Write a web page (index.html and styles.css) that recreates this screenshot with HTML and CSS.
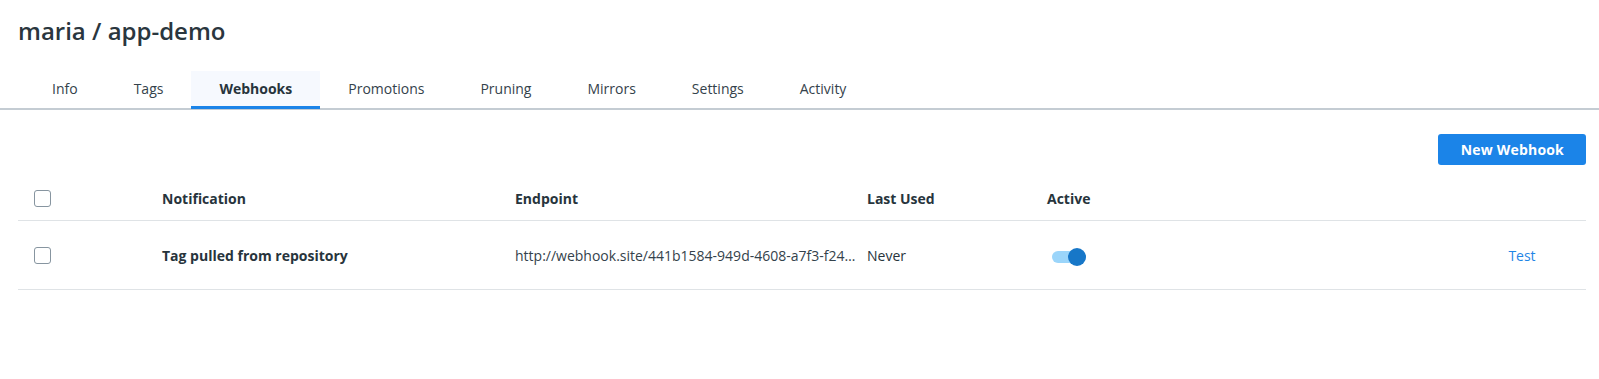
FILE: index.html
```html
<!DOCTYPE html>
<html lang="en">

<head>
    <meta charset="UTF-8">
    <meta name="viewport" content="width=device-width, initial-scale=1.0">
    <title>maria / app-demo - Webhooks</title>
    <link rel="stylesheet" href="styles.css">
</head>

<body>
    <h1 class="repo-title">maria / app-demo</h1>

    <nav class="tabs">
        <a class="tab" href="#">Info</a>
        <a class="tab" href="#">Tags</a>
        <a class="tab active" href="#">Webhooks</a>
        <a class="tab" href="#">Promotions</a>
        <a class="tab" href="#">Pruning</a>
        <a class="tab" href="#">Mirrors</a>
        <a class="tab" href="#">Settings</a>
        <a class="tab" href="#">Activity</a>
    </nav>

    <div class="content">
        <div class="toolbar">
            <button class="btn-primary" type="button">New Webhook</button>
        </div>

        <div class="table">
            <!-- header -->
            <div class="table-row table-head">
                <div class="cell cell-check"><span class="checkbox"></span></div>
                <div class="cell">Notification</div>
                <div class="cell">Endpoint</div>
                <div class="cell">Last Used</div>
                <div class="cell">Active</div>
                <div class="cell"></div>
            </div>

            <!-- webhooks -->
            <div class="table-row">
                <div class="cell cell-check"><span class="checkbox"></span></div>
                <div class="cell cell-strong">Tag pulled from repository</div>
                <div class="cell cell-endpoint" title="http://webhook.site/441b1584-949d-4608-a7f3-f24c6b1d9e2a">http://webhook.site/441b1584-949d-4608-a7f3-f24c6b1d9e2a</div>
                <div class="cell">Never</div>
                <div class="cell"><span class="toggle on"><span class="toggle-thumb"></span></span></div>
                <div class="cell cell-action"><a href="#" class="link">Test</a></div>
            </div>
        </div>
    </div>
</body>

</html>
```

FILE: styles.css
```css
body {
    font-family: "Open Sans", "Noto Sans", sans-serif;
    color: #27343c;
    background-color: #fff;
    margin: 0;
    padding: 0;
}

.repo-title {
    font-size: 24px;
    font-weight: 600;
    line-height: 32px;
    margin: 0;
    padding: 15px 0 0 18px;
    color: #2a363e;
}

/* タブ */
.tabs {
    display: flex;
    margin-top: 24px;
    padding-left: 24px;
    border-bottom: 2px solid #c4ccd3;
}

.tab {
    display: block;
    height: 35px;
    line-height: 36px;
    padding: 0 28px;
    margin-bottom: -1px;
    font-size: 14px;
    color: #34424b;
    text-decoration: none;
    border-bottom: 3px solid transparent;
}

.tab.active {
    font-weight: 700;
    color: #27343c;
    background-color: #f6f9fe;
    border-bottom-color: #1b84e8;
}

.content {
    padding: 0 13px 0 18px;
}

.toolbar {
    display: flex;
    justify-content: flex-end;
    padding-top: 24px;
}

.btn-primary {
    height: 31px;
    padding: 0 22px 0 23px;
    font-family: inherit;
    font-size: 14px;
    font-weight: 700;
    letter-spacing: 0.2px;
    color: #fff;
    background-color: #1b84e8;
    border: none;
    border-radius: 3px;
    cursor: pointer;
}

/* テーブル */
.table {
    margin-top: 12px;
    font-size: 14px;
}

.table-row {
    display: grid;
    grid-template-columns: 144px 353px 352px 180px 1fr 128px;
    align-items: center;
    height: 68px;
    border-bottom: 1px solid #dfe3e6;
}

.table-head {
    height: 43px;
    font-weight: 700;
}

.cell {
    min-width: 0;
}

.cell-check {
    padding-left: 16px;
    display: flex;
    align-items: center;
}

.cell-strong {
    font-weight: 700;
}

.cell-endpoint {
    padding-right: 10px;
    white-space: nowrap;
    overflow: hidden;
    text-overflow: ellipsis;
    color: #34424b;
}

.cell-action {
    text-align: center;
}

.checkbox {
    display: inline-block;
    width: 15px;
    height: 15px;
    border: 1px solid #8795a0;
    border-radius: 3px;
    background-color: #fff;
}

.toggle {
    display: inline-flex;
    align-items: center;
    margin-left: 5px;
    width: 34px;
    height: 12px;
    border-radius: 6px;
    background-color: #9bd5fa;
    vertical-align: middle;
}

.toggle.on {
    justify-content: flex-end;
}

.toggle-thumb {
    width: 18px;
    height: 18px;
    border-radius: 50%;
    background-color: #1777c8;
}

.link {
    color: #1f86e6;
    text-decoration: none;
}
```
